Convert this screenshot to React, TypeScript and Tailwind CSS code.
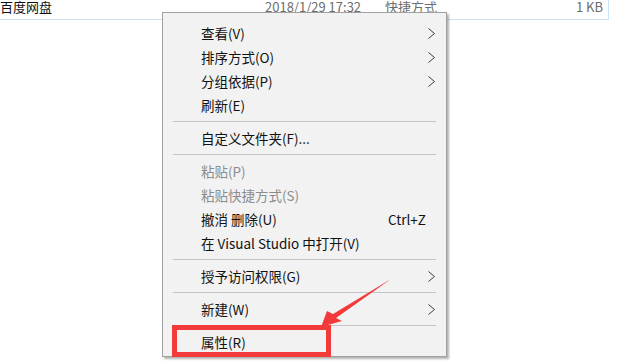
import React from 'react'

type Item =
  | { kind: 'sep' }
  | { kind: 'item'; label: string; sub?: boolean; disabled?: boolean; shortcut?: string }

const items: Item[] = [
  { kind: 'item', label: '查看(V)', sub: true },
  { kind: 'item', label: '排序方式(O)', sub: true },
  { kind: 'item', label: '分组依据(P)', sub: true },
  { kind: 'item', label: '刷新(E)' },
  { kind: 'sep' },
  { kind: 'item', label: '自定义文件夹(F)...' },
  { kind: 'sep' },
  { kind: 'item', label: '粘贴(P)', disabled: true },
  { kind: 'item', label: '粘贴快捷方式(S)', disabled: true },
  { kind: 'item', label: '撤消 删除(U)', shortcut: 'Ctrl+Z' },
  { kind: 'item', label: '在 Visual Studio 中打开(V)' },
  { kind: 'sep' },
  { kind: 'item', label: '授予访问权限(G)', sub: true },
  { kind: 'sep' },
  { kind: 'item', label: '新建(W)', sub: true },
  { kind: 'sep' },
  { kind: 'item', label: '属性(R)' },
]

function Chevron() {
  return (
    <svg width="9" height="11" viewBox="0 0 9 11" className="shrink-0">
      <path d="M1.5 0.5 L7.5 5.5 L1.5 10.5" fill="none" stroke="#3c3c3c" strokeWidth="1" />
    </svg>
  )
}

export default function App() {
  return (
    <div className="relative w-[620px] h-[364px] bg-white overflow-hidden font-['Noto_Sans_CJK_SC',sans-serif] text-[13px]">
      {/* file row behind the menu */}
      <div className="flex items-start w-[609px] h-[20px] border-b border-r border-[#cce4f7] leading-[14px]">
        <span className="w-[265px] text-[#111]">百度网盘</span>
        <span className="w-[120px] text-[#6d6d6d]">2018/1/29 17:32</span>
        <span className="text-[#6d6d6d]">快捷方式</span>
        <span className="ml-auto pr-[5px] text-[#6d6d6d]">1 KB</span>
      </div>

      {/* context menu */}
      <div className="absolute left-[162px] top-[12px] w-[285px] bg-[#f2f2f2] border border-[#a0a0a0] pt-[8px] pb-[2px] shadow-[2px_2px_2px_rgba(0,0,0,0.3)] text-[13.5px]">
        {items.map((it, i) =>
          it.kind === 'sep' ? (
            <div key={i} className="mx-[10px] my-[4px] h-px bg-[#c4c4c4]" />
          ) : (
            <div key={i} className="flex items-center h-6 pl-[38px] pr-[10px]">
              <span className={it.disabled ? 'text-[#8c8c8c]' : 'text-[#111]'}>{it.label}</span>
              {it.shortcut && <span className="ml-auto mr-[10px] text-[#111]">{it.shortcut}</span>}
              {it.sub && <span className="ml-auto"><Chevron /></span>}
            </div>
          )
        )}
      </div>

      {/* annotation: red frame + arrow */}
      <div className="absolute left-[172px] top-[325px] w-[159px] h-[32px] border-[5px] border-[#f23a3a]" />
      <svg className="absolute left-0 top-0 pointer-events-none" width="620" height="364" viewBox="0 0 620 364">
        <polygon
          points="321,327 327,311 333,314 391,279 336,318 342,321"
          fill="#f23a3a"
        />
      </svg>
    </div>
  )
}
